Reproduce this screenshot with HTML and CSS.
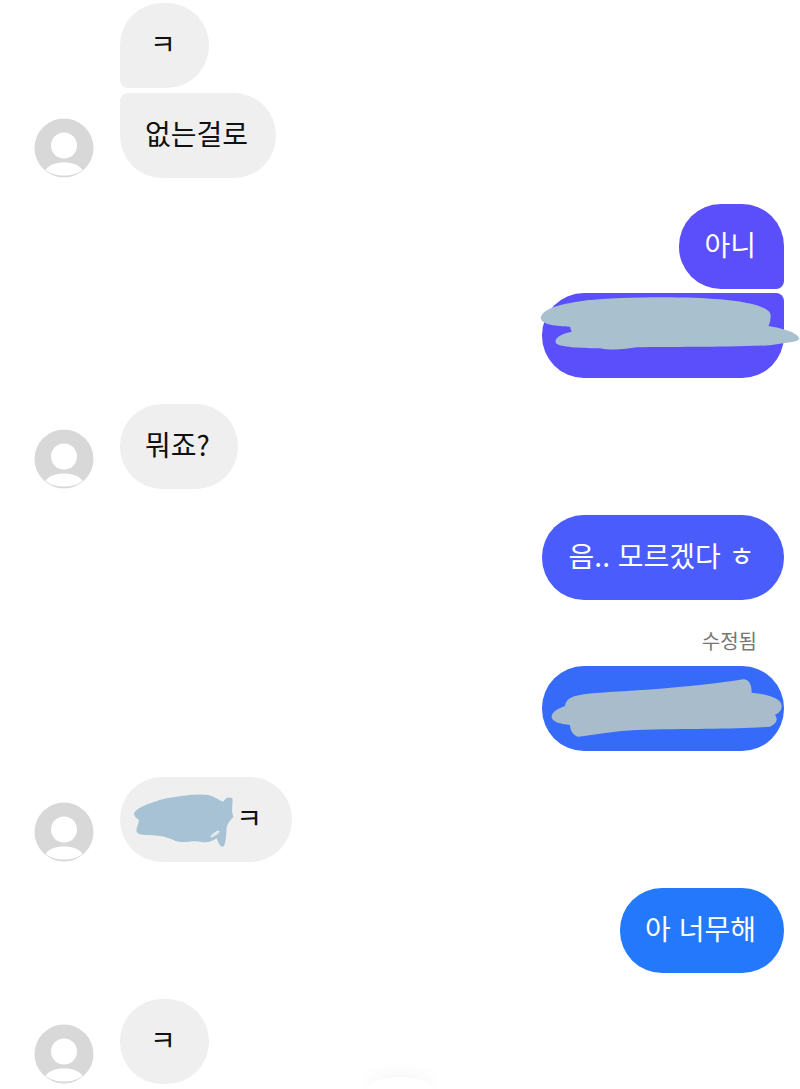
FILE: index.html
```html
<!DOCTYPE html>
<html lang="ko">
<head>
<meta charset="utf-8">
<title>대화</title>
<link rel="stylesheet" href="styles.css">
</head>
<body>
<main class="chat">
  <section class="row row-in">
    <svg class="avatar" viewBox="0 0 60 60"><circle cx="30" cy="30" r="29.5" fill="#d8d8d8"/><circle cx="30" cy="27.5" r="13" fill="#fff"/><path d="M11.5 52c3-5 10-7.500 18.500-7.500s15.500 2.500 18.500 7.500c-4 3.500-11 5.500-18.500 5.500s-14.500-2-18.500-5.500z" fill="#fff"/></svg>
    <div class="stack">
      <div class="bubble in tail-bl">ㅋ</div>
      <div class="bubble in tail-tl">없는걸로</div>
    </div>
  </section>

  <section class="row row-out gap-26">
    <div class="stack stack-out">
      <div class="bubble out violet tail-br">아니</div>
      <div class="bubble out violet tail-tr wide">
        <svg class="scribble s-a" viewBox="0 0 840 600"><path fill="#a9c0cf" d="M62 383C70 360 100 345 200 331C300 320 500 318 600 328C680 335 750 350 752 375C752 390 750 400 745 408C790 415 838 430 838 447C830 458 790 458 750 466C600 472 450 470 350 472C320 478 270 482 240 475C190 475 130 472 110 462C100 450 110 435 155 425L150 410C110 408 65 405 62 383Z"/></svg>
      </div>
    </div>
  </section>

  <section class="row row-in gap-26">
    <svg class="avatar" viewBox="0 0 60 60"><circle cx="30" cy="30" r="29.5" fill="#d8d8d8"/><circle cx="30" cy="27.5" r="13" fill="#fff"/><path d="M11.5 52c3-5 10-7.500 18.500-7.500s15.500 2.500 18.500 7.500c-4 3.500-11 5.500-18.500 5.500s-14.500-2-18.500-5.500z" fill="#fff"/></svg>
    <div class="bubble in">뭐죠?</div>
  </section>

  <section class="row row-out gap-26">
    <div class="bubble out indigo wide">음.. 모르겠다 ㅎ</div>
  </section>

  <p class="edited">수정됨</p>
  <section class="row row-out">
    <div class="bubble out blue wide">
      <svg class="scribble s-b" viewBox="0 0 840 420"><path fill="#a9bccb" d="M95 288C97 275 115 265 135 258C138 240 150 230 180 225C220 218 300 215 400 208C500 200 600 190 670 178C688 178 695 195 695 218C740 222 785 235 785 258C785 272 775 280 765 285C775 298 770 312 750 320C650 328 500 326 350 330C290 332 220 345 175 350C160 348 150 330 150 315C120 312 92 305 95 288Z"/></svg>
    </div>
  </section>

  <section class="row row-in gap-26">
    <svg class="avatar" viewBox="0 0 60 60"><circle cx="30" cy="30" r="29.5" fill="#d8d8d8"/><circle cx="30" cy="27.5" r="13" fill="#fff"/><path d="M11.5 52c3-5 10-7.500 18.500-7.500s15.500 2.500 18.500 7.500c-4 3.500-11 5.500-18.500 5.500s-14.500-2-18.500-5.500z" fill="#fff"/></svg>
    <div class="bubble in name-bubble">
      <svg class="scribble s-c" viewBox="0 0 870 300"><path fill="#a6c2d4" d="M342 130C350 112 400 95 440 85C480 78 530 70 565 75C585 80 595 90 610 95C615 85 625 78 637 85C640 100 632 120 640 140C632 150 622 160 620 172C618 190 620 210 612 228C605 235 597 225 590 205C578 212 565 220 545 216C520 208 490 222 465 212C440 200 420 196 385 195C365 195 345 195 350 175C355 160 362 150 350 145C345 140 342 135 342 130Z"/><ellipse cx="585" cy="192" rx="16" ry="5" transform="rotate(-35 585 192)" fill="#e4e9ec"/></svg>
      <span class="name-suffix">ㅋ</span>
    </div>
  </section>

  <section class="row row-out gap-26">
    <div class="bubble out azure">아 너무해</div>
  </section>

  <section class="row row-in gap-26">
    <svg class="avatar" viewBox="0 0 60 60"><circle cx="30" cy="30" r="29.5" fill="#d8d8d8"/><circle cx="30" cy="27.5" r="13" fill="#fff"/><path d="M11.5 52c3-5 10-7.500 18.500-7.500s15.500 2.500 18.500 7.500c-4 3.500-11 5.500-18.500 5.500s-14.500-2-18.500-5.500z" fill="#fff"/></svg>
    <div class="bubble in">ㅋ</div>
  </section>
</main>
<div class="scroll-button"></div>
</body>
</html>
```

FILE: styles.css
```css
html, body {
  margin: 0;
  height: 1089px;
  overflow: hidden;
  background: #fff;
}

body {
  position: relative;
  font-family: "Noto Sans CJK KR", "Noto Sans", sans-serif;
}

.chat {
  display: flex;
  flex-direction: column;
  padding: 3px 16px 0 34px;
}

.row {
  display: flex;
  align-items: flex-end;
}

.row-in {
  gap: 26px;
}

.row-out {
  justify-content: flex-end;
}

.gap-26 {
  margin-top: 26px;
}

.avatar {
  flex: none;
  width: 60px;
  height: 60px;
}

.stack {
  display: flex;
  flex-direction: column;
  align-items: flex-start;
  gap: 5px;
}

.stack-out {
  align-items: flex-end;
  gap: 4px;
}

.bubble {
  position: relative;
  box-sizing: border-box;
  display: flex;
  align-items: center;
  justify-content: center;
  min-width: 89px;
  height: 85px;
  padding: 0 28px 6px 25px;
  border-radius: 42px;
  font-size: 28px;
  line-height: 1;
  white-space: nowrap;
}

.in {
  background: #efefef;
  color: #111;
}

.out {
  color: #fff;
}

.violet {
  background: #5a4ffb;
}

.indigo {
  background: #4a5cfb;
}

.blue {
  background: #366bfa;
}

.azure {
  background: #2478fb;
}

.wide {
  width: 242px;
}

.tail-bl {
  border-bottom-left-radius: 8px;
}

.tail-tl {
  border-top-left-radius: 8px;
}

.tail-br {
  border-bottom-right-radius: 8px;
}

.tail-tr {
  border-top-right-radius: 8px;
}

.edited {
  margin: 30px 27px 14px 0;
  color: #777;
  font-size: 20px;
  line-height: 22px;
  text-align: right;
}

.name-bubble {
  width: 172px;
  justify-content: flex-end;
  padding-right: 30px;
}

.name-suffix {
  display: block;
}

.scribble {
  position: absolute;
  overflow: visible;
}

.s-a {
  left: -22px;
  top: -103px;
  width: 280px;
  height: 200px;
}

.s-b {
  left: -22px;
  top: -46px;
  width: 280px;
  height: 140px;
}

.s-c {
  left: -100px;
  top: -7px;
  width: 290px;
  height: 100px;
}

.scroll-button {
  position: absolute;
  left: 368px;
  bottom: 0;
  width: 64px;
  height: 12px;
  border-radius: 32px 32px 0 0 / 12px 12px 0 0;
  background: #fff;
  box-shadow: 0 0 20px rgba(0, 0, 0, 0.07);
}
```
